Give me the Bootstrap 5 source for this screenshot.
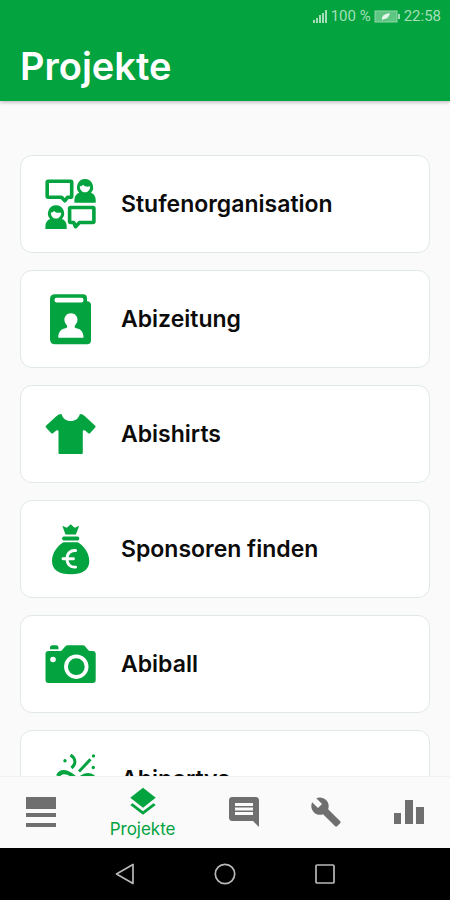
<!DOCTYPE html>
<html lang="de">
<head>
<meta charset="utf-8">
<meta name="viewport" content="width=device-width, initial-scale=1">
<title>Projekte</title>
<link href="https://cdn.jsdelivr.net/npm/bootstrap@5.3.0/dist/css/bootstrap.min.css" rel="stylesheet">
<style>
  :root { --brand: #03a33f; --page: #fafafa; --idle: #6f6f6f; }
  body { background: var(--page); font-family: Inter, "Open Sans", sans-serif; }
  .app-header { background: var(--brand); box-shadow: 0 1px 4px rgba(0,0,0,.3); }
  .status-bar { font: 15px/32px Roboto, sans-serif; color: #a5dfb9; padding-right: 9px; gap: 3px; }
  .app-title { font-size: 38px; line-height: 69px; font-weight: 600; padding-left: 20px; }
  .project-list { padding: 54px 20px 0 20px; gap: 17px; }
  .project-card { height: 98px; flex: none; border: 1px solid #e0e8e8; border-radius: 12px; padding: 0 24px; gap: 25px; color: #0b0b0b; font-size: 23px; line-height: 28px; font-weight: 600; }
  .project-card svg { width: 51px; height: 51px; flex: none; color: var(--brand); }
  .tab-bar { height: 72px; background: var(--page); border-top: 1px solid #f1f1f1; padding-bottom: 2px; }
  .tab-btn { flex: 1 1 0; color: var(--idle); }
  .tab-active { flex-grow: 1.46; color: var(--brand); font-size: 17px; line-height: 20px; }
  .system-bar { height: 52px; gap: 78px; color: #b9b9b9; }
</style>
</head>
<body>
<div class="d-flex flex-column vh-100 overflow-hidden">
  <header class="app-header position-relative z-1">
    <div class="status-bar d-flex justify-content-end align-items-center">
      <svg width="15" height="13" viewBox="0 0 15 13" fill="currentColor" aria-hidden="true"><path d="M0 10h2v3H0zM3 8h2v5H3zM6 5h2v8H6zM9 3h2v10H9zM12 0h2v13h-2z"/></svg>
      <span>100 %</span>
      <svg width="27" height="13" viewBox="0 0 27 13" aria-hidden="true"><rect x="1" y="1" width="22" height="11" fill="#5fc583" stroke="#8fd6a8"/><path d="M24 4h2v5h-2z" fill="#a5dfb9"/><path d="M8 9c0-4 3-5 8-6-1 4-3 6-6 6l-2 1z" fill="#e4f7ea"/></svg>
      <span>22:58</span>
    </div>
    <h1 class="app-title text-white m-0">Projekte</h1>
  </header>

  <main class="project-list d-flex flex-column flex-grow-1 overflow-hidden">
    <a href="#stufe" class="project-card bg-white d-flex align-items-center text-decoration-none">
      <svg viewBox="0 0 51 51" aria-hidden="true">
        <g fill="none" stroke="currentColor" stroke-width="3.6" stroke-linejoin="round"><path d="M3.2 2.3h22.5q1 0 1 1v14q0 1-1 1h-3.2l-2.700 3.500-3.300-3.500H3.200q-1 0-1-1v-14q0-1 1-1z"/><path d="M25.600 28.500h22.300q1 0 1 1v13q0 1-1 1H34.500l-4 4.200-1.700-4.200h-3.200q-1 0-1-1v-13q0-1 1-1z"/></g>
        <g fill="currentColor"><path id="pers" fill-rule="evenodd" d="M40 0a8.200 8.200 0 0 1 6 13.700c3 1 4.700 3.800 4.700 7.300v2.800H29.400V21c0-3.500 1.800-6.300 4.700-7.300A8.200 8.200 0 0 1 40 0zM34.800 7.200c0 3.500 2.200 6.100 5.200 6.100s5.200-2.600 5.200-6.100c-2.800 1-5.600.2-7.200-1.500-.9 1-2 1.500-3.200 1.500z"/><use href="#pers" x="-29" y="26.200"/></g>
      </svg>
      <span>Stufenorganisation</span>
    </a>
    <a href="#zeitung" class="project-card bg-white d-flex align-items-center text-decoration-none">
      <svg viewBox="0 0 51 51" aria-hidden="true">
        <path fill="currentColor" d="M10 .3h28q4 0 4 4v3q4 .3 4 4V46q0 4.300-4 4.300H10q-5 0-5-5V5.300q0-5 5-5z"/>
        <rect x="9.500" y="3.800" width="29" height="4.600" rx="2.200" fill="#fff"/>
        <path fill="#fff" d="M26 19.200c4 0 6.500 2.900 6.500 6.600 0 2.800-1.300 4.200-2.600 5.600-.8 2 .2 2.700 3.300 3.400 3.700 1.300 5.300 4.200 5.300 9H13.300c0-4.800 1.600-7.700 5.300-9 3.200-.7 4.200-1.400 3.400-3.400-1.300-1.400-2.600-2.800-2.600-5.600 0-3.700 2.600-6.600 6.600-6.600z"/>
      </svg>
      <span>Abizeitung</span>
    </a>
    <a href="#shirts" class="project-card bg-white d-flex align-items-center text-decoration-none">
      <svg viewBox="0 0 51 51" aria-hidden="true"><path fill="currentColor" d="M16.500 5c1.200 4.500 4.600 7 9.200 7s8-2.500 9.200-7q2.800 0 5.300 2.400l10 9.400q.8.800 0 1.600l-5.200 5.800q-.8.700-1.700 0l-3.200-2.600q-2.300-1.200-2.300 1V44q0 1-1 1H14.500q-1 0-1-1V22.600q0-2.200-2.300-1L8 24.200q-.9.700-1.700 0L1 18.400q-.8-.8 0-1.600l10-9.400Q13.700 5 16.500 5z"/></svg>
      <span>Abishirts</span>
    </a>
    <a href="#sponsoren" class="project-card bg-white d-flex align-items-center text-decoration-none">
      <svg viewBox="0 0 51 51" aria-hidden="true">
        <path fill="currentColor" d="M17.300 1.800l4.400 2 1.600-1.300 2.500-2.200 2.400 2.200 1.700 1.300 4.300-2-3.300 8.700H20.500zM18.800 12.600h13.800q1.700 0 1.700 1.900t-1.700 1.900H18.800q-1.700 0-1.700-1.900t1.700-1.900zM18.500 18.300h14.300C39 22 44.300 29 44.300 37c0 9-7 13.300-18.600 13.300S7 46 7 37c0-8 5.300-15 11.500-18.700z"/>
        <path fill="none" stroke="#fff" stroke-width="2.900" stroke-linecap="round" d="M30.600 26.500c-5-.5-8.600 2.700-8.600 8.300s3.600 8.800 8.600 8.300M18 34.800h10.500"/>
      </svg>
      <span>Sponsoren finden</span>
    </a>
    <a href="#abiball" class="project-card bg-white d-flex align-items-center text-decoration-none">
      <svg viewBox="0 0 51 51" aria-hidden="true">
        <path fill="currentColor" d="M5 10.200V8.700Q5 6.200 7.500 6.200H11q2.500 0 2.500 2.500v1.500zM3.500 12H15q1.500 0 2.400-1.200l2.700-3.200Q21.300 6.200 23 6.200h14.500q1.700 0 2.800 1.400l2.600 3.200q.9 1.200 2.400 1.200h2.400q3 0 3 3v26q0 3-3 3H3.500q-3 0-3-3V15q0-3 3-3z"/>
        <circle cx="8" cy="20.500" r="2.800" fill="#fff"/><circle cx="31.300" cy="27.700" r="10.300" fill="none" stroke="#fff" stroke-width="3.800"/>
      </svg>
      <span>Abiball</span>
    </a>
    <a href="#abipartys" class="project-card bg-white d-flex align-items-center text-decoration-none">
      <svg viewBox="0 0 51 51" aria-hidden="true">
        <g fill="none" stroke="currentColor" stroke-width="3"><path d="M25.500 1c5.500 3.500 5.800 9 1 13M34 17.500L45.500 5.300"/><path d="M36 23q6-4.500 13-.5"/><path stroke-width="4" d="M13 22c2-4 6-4.500 10-3 4 1.800 8 5 10 10"/><path d="M13 22L1.500 49 30 38"/></g>
        <g fill="currentColor"><circle cx="20" cy="6.700" r="1.700"/><circle cx="48.500" cy="1.900" r="1.700"/><circle cx="48.300" cy="13.500" r="1.700"/></g>
      </svg>
      <span>Abipartys</span>
    </a>
  </main>

  <nav class="tab-bar d-flex flex-shrink-0" aria-label="Hauptnavigation">
    <button type="button" class="tab-btn btn border-0 rounded-0 p-0 d-flex align-items-center justify-content-center" aria-label="Übersicht">
      <svg width="30" height="30" viewBox="0 0 30 30" fill="currentColor"><path d="M0 0h30v12H0zM0 16h30v4H0zM0 26h30v4H0z"/></svg>
    </button>
    <button type="button" class="tab-btn tab-active btn border-0 rounded-0 p-0 d-flex flex-column align-items-center justify-content-center" aria-current="page">
      <svg width="34" height="34" viewBox="0 0 24 24" fill="currentColor" aria-hidden="true"><path d="M11.990 18.540l-7.370-5.730L3 14.070l9 7 9-7-1.630-1.270-7.380 5.740zM12 16l7.360-5.730L21 9l-9-7-9 7 1.630 1.270L12 16z"/></svg>
      <span>Projekte</span>
    </button>
    <button type="button" class="tab-btn btn border-0 rounded-0 p-0 d-flex align-items-center justify-content-center" aria-label="Nachrichten">
      <svg width="36" height="36" viewBox="0 0 24 24" fill="currentColor"><path d="M21.990 4c0-1.100-.89-2-1.990-2H4c-1.100 0-2 .9-2 2v12c0 1.100.9 2 2 2h14l4 4-.01-18zM18 14H6v-2h12v2zm0-3H6V9h12v2zm0-3H6V6h12v2z"/></svg>
    </button>
    <button type="button" class="tab-btn btn border-0 rounded-0 p-0 d-flex align-items-center justify-content-center" aria-label="Werkzeuge">
      <svg width="32" height="32" viewBox="0 0 24 24" fill="currentColor"><path d="M22.700 19l-9.100-9.100c.9-2.300.4-5-1.500-6.900-2-2-5-2.400-7.400-1.300L9 6 6 9 1.600 4.700C.4 7.100.9 10.100 2.900 12.100c1.900 1.900 4.600 2.400 6.900 1.500l9.100 9.100c.4.4 1 .4 1.400 0l2.300-2.300c.5-.4.5-1.100.1-1.400z"/></svg>
    </button>
    <button type="button" class="tab-btn btn border-0 rounded-0 p-0 d-flex align-items-center justify-content-center" aria-label="Umfragen">
      <svg width="30" height="24" viewBox="0 0 30 24" fill="currentColor"><path d="M0 13h7v11H0zM11 0h8v24h-8zM22 7h8v17h-8z"/></svg>
    </button>
  </nav>

  <div class="system-bar bg-black d-flex flex-shrink-0 justify-content-center align-items-center">
    <button type="button" class="btn border-0 p-0 d-flex text-reset" aria-label="Zurück"><svg width="22" height="22" viewBox="0 0 22 22" fill="none" stroke="currentColor" stroke-width="1.700" stroke-linejoin="round"><path d="M19 1.500v19L2.500 11z"/></svg></button>
    <button type="button" class="btn border-0 p-0 d-flex text-reset" aria-label="Start"><svg width="22" height="22" viewBox="0 0 22 22" fill="none" stroke="currentColor" stroke-width="1.700"><circle cx="11" cy="11" r="9.700"/></svg></button>
    <button type="button" class="btn border-0 p-0 d-flex text-reset" aria-label="Letzte Apps"><svg width="22" height="22" viewBox="0 0 22 22" fill="none" stroke="currentColor" stroke-width="1.700"><rect x="2" y="2" width="18" height="18" rx="1"/></svg></button>
  </div>
</div>
<script src="https://cdn.jsdelivr.net/npm/bootstrap@5.3.0/dist/js/bootstrap.bundle.min.js"></script>
</body>
</html>
